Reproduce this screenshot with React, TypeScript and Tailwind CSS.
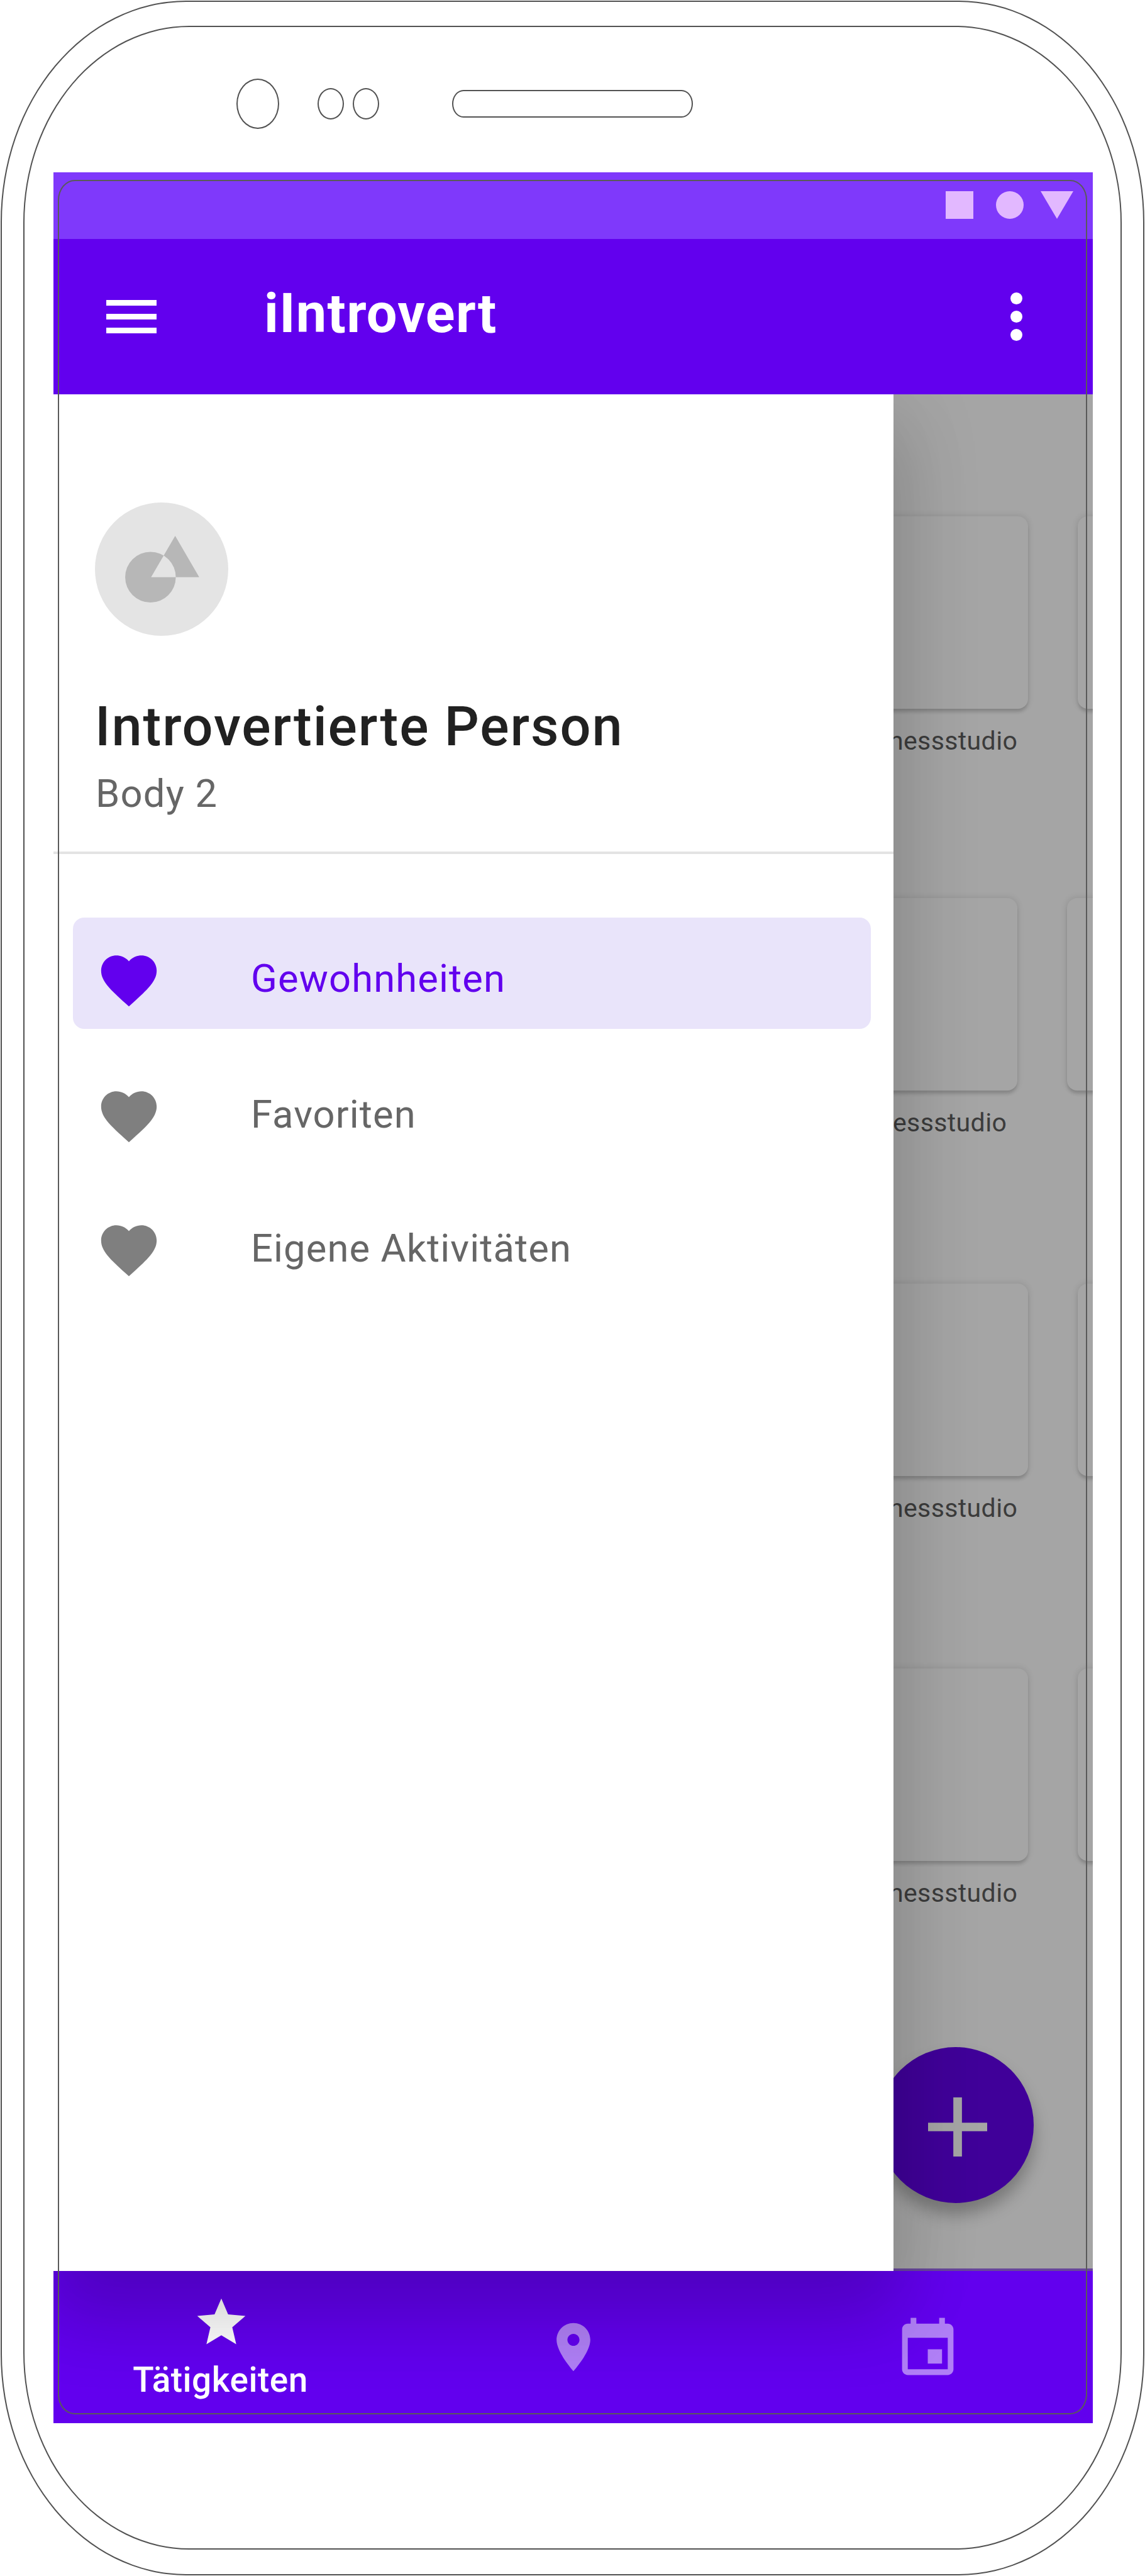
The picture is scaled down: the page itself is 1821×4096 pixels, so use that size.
import React from "react";

const HEART =
  "M12 21.35l-1.45-1.32C5.4 15.36 2 12.28 2 8.5 2 5.42 4.42 3 7.5 3c1.74 0 3.41.81 4.5 2.09C13.09 3.81 14.76 3 16.5 3 19.58 3 22 5.42 22 8.5c0 3.78-3.4 6.86-8.55 11.54L12 21.35z";
const STAR =
  "M12 17.27L18.18 21l-1.64-7.03L22 9.24l-7.19-.61L12 2 9.19 8.63 2 9.24l5.46 4.73L5.82 21z";
const PIN =
  "M12 2C8.13 2 5 5.13 5 9c0 5.25 7 13 7 13s7-7.75 7-13c0-3.87-3.13-7-7-7zm0 9.5c-1.38 0-2.5-1.12-2.5-2.5s1.12-2.5 2.5-2.5 2.5 1.12 2.5 2.5-1.12 2.5-2.5 2.5z";
const CALENDAR =
  "M17 12h-5v5h5v-5zM16 1v2H8V1H6v2H5c-1.11 0-1.99.9-1.99 2L3 19c0 1.1.89 2 2 2h14c1.1 0 2-.9 2-2V5c0-1.1-.9-2-2-2h-1V1h-2zm3 18H5V8h14v11z";

function Icon({ d, className }: { d: string; className: string }) {
  return (
    <svg viewBox="0 0 24 24" fill="currentColor" className={`shrink-0 ${className}`}>
      <path d={d} />
    </svg>
  );
}

function Sensors() {
  return (
    <div className="flex h-[231px] items-center pl-[337px] pt-[12px]">
      <div className="h-[80px] w-[68px] rounded-[50%] border-2 border-[#525252]" />
      <div className="ml-[61px] h-[50px] w-[42px] rounded-[50%] border-2 border-[#525252]" />
      <div className="ml-[14px] h-[50px] w-[42px] rounded-[50%] border-2 border-[#525252]" />
      <div className="ml-[116px] h-[44px] w-[383px] rounded-[18px/22px] border-2 border-[#525252]" />
    </div>
  );
}

function StatusBar() {
  return (
    <div className="flex h-[106px] items-start justify-end bg-[#7f39fb] pr-[31px] pt-[30px] text-[#e2b8ff]">
      <div className="size-[44px] bg-current" />
      <div className="ml-[36px] size-[44px] rounded-full bg-current" />
      <svg viewBox="0 0 52 44" className="ml-[27px] h-[44px] w-[52px]" fill="currentColor">
        <path d="M0 0H52L26 44Z" />
      </svg>
    </div>
  );
}

function AppBar() {
  return (
    <header className="relative z-20 flex h-[247px] items-center bg-[#6200ee] pl-[84px] pr-[112px]">
      <div className="flex w-[80px] flex-col gap-[13px]">
        <div className="h-[9px] bg-white" />
        <div className="h-[9px] bg-white" />
        <div className="h-[9px] bg-white" />
      </div>
      <h1 className="-mt-[8px] ml-[171px] flex-1 text-[86.5px] font-bold leading-none tracking-[1.3px] text-white">
        iIntrovert
      </h1>
      <div className="flex flex-col gap-[10px]">
        <div className="size-[19px] rounded-full bg-white" />
        <div className="size-[19px] rounded-full bg-white" />
        <div className="size-[19px] rounded-full bg-white" />
      </div>
    </header>
  );
}

function Card({ label }: { label?: string }) {
  return (
    <div className="w-[285px] shrink-0">
      <div className="h-[306px] rounded-[16px] bg-[#a5a5a5] shadow-[0_6px_5px_-1px_rgba(0,0,0,0.14),0_0_10px_2px_rgba(0,0,0,0.09)]" />
      {label && (
        <p className="mt-[31px] text-center text-[41px] leading-none tracking-[0.4px] text-[#3c3c3c]">
          {label}
        </p>
      )}
    </div>
  );
}

const ROWS = [
  "h-[607px] pl-[1265px]",
  "h-[613px] pl-[1248px]",
  "h-[612px] pl-[1265px]",
  "h-[500px] pl-[1265px]",
];

function Content() {
  return (
    <main className="relative h-full overflow-hidden border-b-4 border-[#67479a] bg-[#a5a5a5] pt-[194px]">
      {ROWS.map((row, i) => (
        <div key={i} className={`flex gap-[79px] ${row}`}>
          <Card label="Fitnessstudio" />
          <Card />
        </div>
      ))}
      <button className="absolute bottom-[104px] right-[94px] flex size-[248px] items-center justify-center rounded-full bg-[#400099] shadow-[0_18px_26px_rgba(0,0,0,0.28)]">
        <svg viewBox="0 0 96 96" className="ml-[5px] mt-[5px] size-[94px]" fill="#a5a5a5">
          <path d="M41 0H55V41H96V55H55V96H41V55H0V41H41Z" />
        </svg>
      </button>
    </main>
  );
}

const ITEMS = [
  { label: "Gewohnheiten", row: "bg-[#e9e4fa] text-[#6200ee]", icon: "text-[#6200ee]" },
  { label: "Favoriten", row: "mt-[39px] text-[#666666]", icon: "text-[#7f7f7f]" },
  { label: "Eigene Aktivitäten", row: "mt-[36px] text-[#666666]", icon: "text-[#7f7f7f]" },
];

function Drawer() {
  return (
    <aside className="absolute inset-y-0 left-0 z-10 w-[1336px] bg-white pt-[172px] shadow-[0_72px_108px_9px_rgba(0,0,0,0.14),0_27px_135px_22px_rgba(0,0,0,0.07)]">
      <svg viewBox="0 0 216 216" className="ml-[66px] size-[212px]">
        <circle cx="108" cy="108" r="108" fill="#e4e4e4" />
        <path
          fill="#b7b7b7"
          fillRule="evenodd"
          d="M49 121a41 41 0 1 0 82 0a41 41 0 1 0 -82 0ZM130 54L169 121H91Z"
        />
      </svg>
      <h2 className="ml-[66px] mt-[102px] whitespace-nowrap text-[86.5px] font-medium leading-none tracking-[1.9px] text-[#212121]">
        Introvertierte Person
      </h2>
      <p className="ml-[67px] mt-[32px] text-[61.5px] leading-none tracking-[1.2px] text-[#666666]">
        Body 2
      </p>
      <div className="mt-[61px] h-1 bg-[#e3e3e3]" />
      <nav className="ml-[31px] mt-[101px] w-[1269px]">
        {ITEMS.map((item) => (
          <div
            key={item.label}
            className={`flex h-[177px] items-center rounded-[18px] pl-[36px] pt-[23px] ${item.row}`}
          >
            <Icon d={HEART} className={`size-[106px] ${item.icon}`} />
            <span className="-mt-[5px] ml-[141px] text-[61.5px] leading-none tracking-[1.1px]">
              {item.label}
            </span>
          </div>
        ))}
      </nav>
    </aside>
  );
}

function BottomNav() {
  return (
    <footer className="h-[242px] bg-[#6200ee]">
      <div className="-mx-[15px] grid h-full grid-cols-3">
        <div className="flex flex-col items-center pt-[36px] text-white">
          <Icon d={STAR} className="ml-[3px] size-[92px]" />
          <span className="mt-[18px] text-[55px] font-medium leading-none tracking-[0.5px]">
            Tätigkeiten
          </span>
        </div>
        <div className="flex items-center justify-center">
          <Icon d={PIN} className="size-[92px] text-[#b07ff6]" />
        </div>
        <div className="flex items-center justify-center">
          <Icon d={CALENDAR} className="ml-[6px] mt-[7px] size-[109px] text-[#b07ff6]" />
        </div>
      </div>
    </footer>
  );
}

export default function App() {
  return (
    <div className="relative h-[4096px] w-[1821px] overflow-hidden bg-white p-[1px] font-['Roboto',sans-serif]">
      <div className="h-[4094px] w-[1819px] rounded-[295px/352px] border-2 border-[#525252] px-[34px] pt-[38px]">
        <div className="h-[4013px] rounded-[264px/313px] border-2 border-[#525252]">
          <Sensors />
          <div className="relative ml-[46px] w-[1653px]">
            <div className="flex flex-col overflow-hidden">
              <StatusBar />
              <AppBar />
              <div className="relative h-[2984px]">
                <Content />
                <Drawer />
              </div>
              <BottomNav />
            </div>
            <div className="pointer-events-none absolute bottom-[14px] left-[7px] right-[9px] top-[12px] z-30 rounded-[27px/32px] border-2 border-[#5a5a5a]" />
          </div>
        </div>
      </div>
    </div>
  );
}
